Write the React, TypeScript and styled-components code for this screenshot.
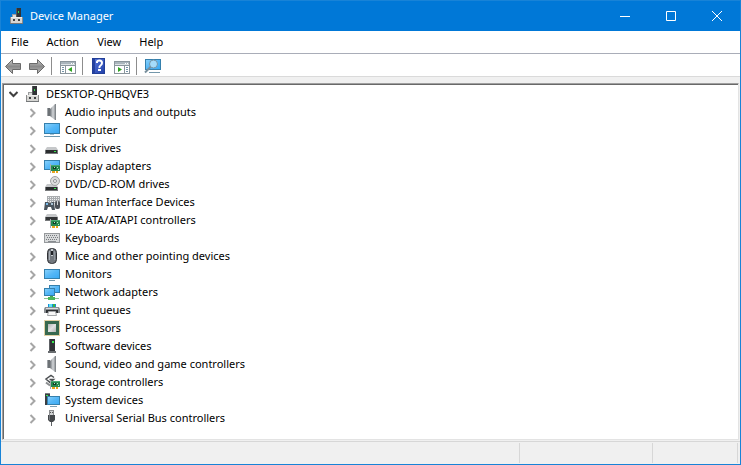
import React from "react";
import styled, { createGlobalStyle } from "styled-components";

const GlobalStyle = createGlobalStyle`
  *, *::before, *::after { box-sizing: border-box; }
  html, body { margin: 0; padding: 0; }
  body, button { font-family: "Noto Sans", "Open Sans", sans-serif; font-size: 11px; color: #000; }
  button { margin: 0; padding: 0; border: 0; background: none; }
`;

const Window = styled.main`
  display: flex;
  flex-direction: column;
  min-height: 100vh;
  border: 1px solid #1883d7;
  background: #f0f0f0;
`;

const TitleBar = styled.header`
  display: flex;
  align-items: center;
  height: 30px;
  padding-left: 8px;
  background: #0078d7;
  color: #fff;
`;

const Title = styled.h1`
  flex: 1;
  margin: 0 0 0 5px;
  font-size: 11px;
  font-weight: 400;
  line-height: 18px;
`;

const CaptionButton = styled.button`
  display: flex;
  align-items: center;
  justify-content: center;
  width: 46px;
  height: 30px;
`;

const MenuBar = styled.nav`
  display: flex;
  height: 23px;
  padding-left: 1px;
  background: #fff;
  border-bottom: 1px solid #a9adb8;
`;

const MenuItem = styled.button`
  padding: 0 9px;
  line-height: 22px;
`;

const Toolbar = styled.div`
  display: flex;
  align-items: center;
  height: 23px;
  padding: 2px 0 0 1px;
  background: #fff;
  border-bottom: 1px solid #dadada;
`;

const ToolButton = styled.button`
  display: flex;
  align-items: center;
  justify-content: center;
  width: 23px;
  height: 20px;
`;

const Divider = styled.span`
  width: 1px;
  height: 18px;
  margin: 0 4px 0 3px;
  background: #8d8d8d;
`;

const TreePanel = styled.section`
  flex: 1;
  margin: 6px 1px 1px 1px;
  border-style: solid;
  border-width: 1px;
  border-color: #a0a0a0 #e3e3e3 #e3e3e3 #a0a0a0;
  box-shadow: inset 1px 1px 0 #696969;
  background: #fff;
  padding: 1px 0 12px 1px;
`;

const TreeList = styled.ul`
  margin: 0;
  padding: 0;
  list-style: none;
`;

const TreeRow = styled.div<{ $level: number }>`
  display: flex;
  align-items: center;
  height: 18px;
  padding-left: ${(p) => (p.$level === 0 ? 1 : 20)}px;
`;

const Expander = styled.button`
  display: flex;
  align-items: center;
  justify-content: center;
  width: 18px;
  height: 18px;
`;

const IconSlot = styled.span`
  display: flex;
  width: 16px;
  height: 16px;
  margin: 0 5px 0 2px;
`;

const RowLabel = styled.span`
  line-height: 18px;
  white-space: nowrap;
`;

const StatusBar = styled.footer`
  display: flex;
  height: 23px;
  padding: 1px 2px 1px 0;
  border-top: 1px solid #d7d7d7;
`;

const StatusCell = styled.div<{ $width?: number }>`
  flex: ${(p) => (p.$width ? `0 0 ${p.$width}px` : "1")};
  border-right: 1px solid #d7d7d7;
`;

const PaintDefs = styled.svg`
  display: block;
  width: 0;
  height: 0;
`;

const Svg = ({ children, w = 16, h = 16 }: { children: React.ReactNode; w?: number; h?: number }) => (
  <svg width={w} height={h} viewBox={`0 0 ${w} ${h}`} fill="none" aria-hidden="true">
    {children}
  </svg>
);

const Gradients = () => (
  <PaintDefs aria-hidden="true">
    <defs>
      <linearGradient id="screen" x1="0" y1="0" x2="1" y2="1">
        <stop offset="0" stopColor="#8ad2fb" />
        <stop offset=".5" stopColor="#55b7f7" />
        <stop offset="1" stopColor="#38a9f4" />
      </linearGradient>
      <linearGradient id="metal" x1="0" y1="0" x2="1" y2="0">
        <stop offset="0" stopColor="#6f7479" />
        <stop offset=".5" stopColor="#d3d6d9" />
        <stop offset="1" stopColor="#777b80" />
      </linearGradient>
      <linearGradient id="arrow" x1="0" y1="0" x2="0" y2="1">
        <stop offset="0" stopColor="#cacaca" />
        <stop offset=".5" stopColor="#8a8a8a" />
        <stop offset="1" stopColor="#bcbcbc" />
      </linearGradient>
      <linearGradient id="help" x1="0" y1="0" x2="1" y2="1">
        <stop offset="0" stopColor="#5777dc" />
        <stop offset="1" stopColor="#2140a8" />
      </linearGradient>
      <linearGradient id="chip" x1="0" y1="0" x2="1" y2="1">
        <stop offset="0" stopColor="#b4b4b4" />
        <stop offset=".5" stopColor="#e2e2e2" />
        <stop offset="1" stopColor="#b4b4b4" />
      </linearGradient>
    </defs>
  </PaintDefs>
);

const Screen = ({ x, y, w, h }: { x: number; y: number; w: number; h: number }) => (
  <rect x={x + 0.5} y={y + 0.5} width={w - 1} height={h - 1} fill="url(#screen)" stroke="#3580ad" />
);

const Card = ({ x, y }: { x: number; y: number }) => (
  <g transform={`translate(${x} ${y})`}>
    <path d="M0 0h1v9H0z" fill="#a9adb0" />
    <path d="M1 1h9v6H1z" fill="#258a50" />
    <path d="M1 1h9v1H1z" fill="#4aa973" />
    <path d="M3 3h3v2H3z" fill="#123c25" />
    <path d="M4 3h1v1H4zM7 3h1v1H7zM8 5h1v1H8z" fill="#b8e3c8" />
    <path d="M2 7h3v2H2zM6 7h2v2H6z" fill="#e8a51d" />
  </g>
);

const DriveBody = ({ y }: { y: number }) => (
  <g transform={`translate(0 ${y})`}>
    <path d="M3 0h9l2 3H1z" fill="#c6c8ca" />
    <path d="M1 3h13v4H1z" fill="#77797b" />
    <path d="M2 3h11v3H2z" fill="#2b2d2f" />
    <path d="M10 4h2v1h-2z" fill="#36e34b" />
  </g>
);

const DeviceIcon = () => (
  <Svg>
    <path d="M7 0h5v9H7z" fill="#303235" />
    <path d="M7 0h1v9H7z" fill="#56595c" />
    <path d="M9 3h1v2H9z" fill="#32dc4a" />
    <path d="M3 6h4v3H3z" fill="#9a9c9d" />
    <path d="M4 7h3v2H4z" fill="#dcdcda" />
    <path d="M1 9h13v7H1z" fill="#8b8b8b" />
    <path d="M2 9h11v6H2z" fill="#d6d6d3" />
    <path d="M2 9h11v1H2z" fill="#efefed" />
    <path d="M4 11h2v2H4zM9 11h2v2H9z" fill="#3f4244" />
    <path d="M1 15h13v1H1z" fill="#75787a" />
  </Svg>
);

const SpeakerIcon = () => (
  <Svg>
    <path d="M3 4h3v8H3z" fill="#6c7175" />
    <path d="M3 4h1v8H3z" fill="#a1a5a9" />
    <path d="M6 5l5-5h1v16h-1l-5-4z" fill="url(#metal)" />
    <path d="M11 0h1v16h-1z" fill="#82878b" />
  </Svg>
);

const ComputerIcon = () => (
  <Svg>
    <Screen x={0} y={1} w={16} h={11} />
    <path d="M6 12h4v1H6z" fill="#a5c3d4" />
    <path d="M0 14h16v1H0z" fill="#6e97ad" />
  </Svg>
);

const MonitorIcon = () => (
  <Svg>
    <Screen x={0} y={3} w={16} h={10} />
    <path d="M5 14h6v1H5z" fill="#7598ab" />
  </Svg>
);

const DiskIcon = () => (
  <Svg>
    <DriveBody y={7} />
  </Svg>
);

const DisplayIcon = () => (
  <Svg>
    <Screen x={0} y={2} w={16} h={10} />
    <Card x={6} y={6} />
  </Svg>
);

const DiscIcon = () => (
  <Svg>
    <DriveBody y={8} />
    <circle cx="11" cy="5" r="4.5" fill="#dcdddd" stroke="#9fa1a2" />
    <circle cx="11" cy="5" r="1.5" fill="#fff" stroke="#8e9092" />
  </Svg>
);

const HidIcon = () => (
  <Svg>
    <path d="M3 2h13v7H3z" fill="#a9acaf" />
    <path d="M4 3.5h11M4 5.5h11M4 7.5h11" stroke="#eef0f1" strokeDasharray="1 1" />
    <path d="M1 8h3l1 1h2l1-1h2l1 8H8l-1-3H4l-1 3H0z" fill="#4a545d" />
    <path d="M2 9h2v2H2z" fill="#79b9e7" />
    <path d="M7 9h2v2H7z" fill="#a9c3d4" />
    <rect x="11" y="7" width="5" height="8" rx="2" fill="#4b5056" />
    <path d="M13 7h1v4h-1z" fill="#d3d6d9" />
  </Svg>
);

const IdeIcon = () => (
  <Svg>
    <path d="M3 2h9l2 3H1z" fill="#c6c8ca" />
    <path d="M1 5h13v4H1z" fill="#77797b" />
    <path d="M2 5h11v3H2z" fill="#333537" />
    <Card x={6} y={7} />
  </Svg>
);

const KeyboardIcon = () => (
  <Svg>
    <rect x="0.5" y="3.5" width="15" height="9" fill="#d8dadb" stroke="#96999c" />
    <path d="M2 5.5h12M3 7.5h11M2 9.5h12" stroke="#777b7f" strokeDasharray="1 1" />
    <path d="M4 11h8v1H4z" fill="#888c90" />
  </Svg>
);

const MouseIcon = () => (
  <Svg>
    <rect x="3.5" y="0.5" width="9" height="15" rx="4" fill="#73787e" stroke="#303236" />
    <path d="M5.5 3v9" stroke="#a9afb6" />
    <path d="M10.5 3v9" stroke="#90969d" />
    <path d="M7 1h2v7H7z" fill="#c9ced3" />
    <path d="M7 3h2v4H7z" fill="#202226" />
  </Svg>
);

const NetworkIcon = () => (
  <Svg>
    <Screen x={5} y={1} w={11} h={8} />
    <Screen x={0} y={4} w={11} h={8} />
    <path d="M6 12h3v2H6z" fill="#46a852" />
    <path d="M0 14h15v1H0z" fill="#8ac592" />
    <path d="M4 13h7v3H4z" fill="#4bb65a" />
  </Svg>
);

const PrinterIcon = () => (
  <Svg>
    <path d="M4 2h8v4H4z" fill="#188bdc" />
    <path d="M5 2h3v3H5z" fill="#5ee2ef" />
    <path d="M9 2h2v3H9z" fill="#39b547" />
    <path d="M1 5h14l1 2v4H0V7z" fill="#8b8f93" />
    <path d="M2 6h12v1H2z" fill="#d9dcde" />
    <path d="M2 8h12v3H2z" fill="#2d3033" />
    <path d="M4.5 9.5h7l1 4h-9z" fill="#f7f7f7" stroke="#a3a6a9" />
  </Svg>
);

const ProcessorIcon = () => (
  <Svg>
    <rect x="0.5" y="0.5" width="15" height="15" stroke="#c5a34a" strokeDasharray="1 1" />
    <path d="M1 1h14v14H1z" fill="#38694f" />
    <path d="M4 4h8v8H4z" fill="url(#chip)" />
  </Svg>
);

const SoftwareIcon = () => (
  <Svg>
    <rect x="5" y="1" width="6" height="12" fill="#303236" />
    <path d="M5 1h1v12H5z" fill="#5d6064" />
    <path d="M8 3h2v2H8z" fill="#39e650" />
    <path d="M4 13h8v2H4z" fill="#696d70" />
  </Svg>
);

const StorageIcon = () => (
  <Svg>
    <path d="M10 3.5L7 1.5 2 5l4 3.5L9.5 5.5h-4" stroke="#4d5053" strokeWidth="1.5" />
    <path d="M2 8.5l4 3" stroke="#8b8e90" strokeWidth="2" />
    <Card x={6} y={6} />
  </Svg>
);

const SystemIcon = () => (
  <Svg>
    <path d="M1 1h5v12H1z" fill="#3a3e42" />
    <path d="M1 1h5v1H1z" fill="#7a7e82" />
    <path d="M2 3h2v1H2z" fill="#39e650" />
    <Screen x={3} y={4} w={13} h={9} />
    <path d="M6 14h7v1H6z" fill="#7da0b4" />
  </Svg>
);

const UsbIcon = () => (
  <Svg>
    <path d="M5 0h5v5H5z" fill="#8b8d8f" />
    <path d="M6 1h3v4H6z" fill="#d0d2d3" />
    <path d="M6 2h1v1H6zM8 2h1v1H8z" fill="#555" />
    <path d="M4 5h7v5l-2 2H6l-2-2z" fill="#45484b" />
    <path d="M5 5h1v5H5z" fill="#777b7f" />
    <path d="M7 12h1v4H7z" fill="#5e6164" />
  </Svg>
);

const ArrowIcon = ({ forward = false }: { forward?: boolean }) => (
  <Svg w={17}>
    <path
      d={forward ? "M16.5 8.5l-7-7v4h-8v6h8v4z" : "M.5 8.5l7-7v4h8v6h-8v4z"}
      fill="url(#arrow)"
      stroke="#6b6b6b"
      strokeLinejoin="round"
    />
  </Svg>
);

const ConsoleIcon = ({ right = false }: { right?: boolean }) => (
  <Svg>
    <rect x="0.5" y="3.5" width="15" height="12" fill="#fff" stroke="#8a959c" />
    <path d="M1 4h14v2H1z" fill="#aab5bc" />
    <path d="M1 6h14v1H1z" fill="#dce2e5" />
    <path d="M1 7h14v1H1z" fill="#8a959c" />
    <path d="M11 5h1v1h-1zM13 5h1v1h-1z" fill="#fff" />
    <path d={right ? "M10 8h1v7h-1z" : "M5 8h1v7H5z"} fill="#8a959c" />
    <path d={right ? "M12 9.5h2M12 11.5h2M12 13.5h2" : "M2 9.5h2M2 11.5h2M2 13.5h2"} stroke="#7594a8" />
    <path d={right ? "M4 9v5l4-2.5z" : "M12 9v5l-4-2.5z"} fill="#31a423" />
  </Svg>
);

const HelpIcon = () => (
  <Svg w={13}>
    <rect x="0.5" y="0.5" width="12" height="15" fill="url(#help)" stroke="#223f98" />
    <path d="M1 1h2v14H1z" fill="#25419f" />
    <path d="M5 5V4q0-1.5 2.5-1.5T10 5q0 1.5-1.5 2.5T7.5 10" stroke="#fff" strokeWidth="2" />
    <path d="M6 11h3v2H6z" fill="#fff" />
  </Svg>
);

const ScanIcon = () => (
  <Svg w={17}>
    <Screen x={1} y={1} w={16} h={11} />
    <path d="M5 14h11v1H5z" fill="#7397aa" />
    <circle cx="9.5" cy="6" r="4" fill="#a5dcfb" stroke="#7795a7" />
    <path d="M6.5 9L1 14.5" stroke="#788f9c" strokeWidth="2" />
  </Svg>
);

const ChevronDown = () => (
  <Svg w={10} h={10}>
    <path d="M.5 3l4 4 4-4" stroke="#404040" strokeWidth="2" />
  </Svg>
);

const ChevronRight = () => (
  <Svg w={10} h={12}>
    <path d="M2.5 3l4 4-4 4" stroke="#a6a6a6" strokeWidth="2" />
  </Svg>
);

const categories: [string, React.FC][] = [
  ["Audio inputs and outputs", SpeakerIcon],
  ["Computer", ComputerIcon],
  ["Disk drives", DiskIcon],
  ["Display adapters", DisplayIcon],
  ["DVD/CD-ROM drives", DiscIcon],
  ["Human Interface Devices", HidIcon],
  ["IDE ATA/ATAPI controllers", IdeIcon],
  ["Keyboards", KeyboardIcon],
  ["Mice and other pointing devices", MouseIcon],
  ["Monitors", MonitorIcon],
  ["Network adapters", NetworkIcon],
  ["Print queues", PrinterIcon],
  ["Processors", ProcessorIcon],
  ["Software devices", SoftwareIcon],
  ["Sound, video and game controllers", SpeakerIcon],
  ["Storage controllers", StorageIcon],
  ["System devices", SystemIcon],
  ["Universal Serial Bus controllers", UsbIcon],
];

export default function App() {
  return (
    <>
      <GlobalStyle />
      <Window>
        <TitleBar>
          <DeviceIcon />
          <Title>Device Manager</Title>
          <CaptionButton aria-label="Minimize">
            <Svg w={10} h={10}><path d="M0 5.5h10" stroke="#fff" /></Svg>
          </CaptionButton>
          <CaptionButton aria-label="Maximize">
            <Svg w={10} h={10}><path d="M.5.5h9v9h-9z" stroke="#fff" /></Svg>
          </CaptionButton>
          <CaptionButton aria-label="Close">
            <Svg w={10} h={10}><path d="M0 0l10 10M10 0L0 10" stroke="#fff" /></Svg>
          </CaptionButton>
        </TitleBar>
        <MenuBar aria-label="Menu">
          {["File", "Action", "View", "Help"].map((m) => (
            <MenuItem key={m}>{m}</MenuItem>
          ))}
        </MenuBar>
        <Toolbar role="toolbar" aria-label="Tools">
          <ToolButton aria-label="Back"><ArrowIcon /></ToolButton>
          <ToolButton aria-label="Forward"><ArrowIcon forward /></ToolButton>
          <Divider />
          <ToolButton aria-label="Show console tree"><ConsoleIcon /></ToolButton>
          <Divider />
          <ToolButton aria-label="Help"><HelpIcon /></ToolButton>
          <ToolButton aria-label="Show action pane"><ConsoleIcon right /></ToolButton>
          <Divider />
          <ToolButton aria-label="Scan for hardware changes"><ScanIcon /></ToolButton>
        </Toolbar>
        <TreePanel>
          <TreeList>
            <li>
              <TreeRow $level={0}>
                <Expander aria-label="Collapse DESKTOP-QHBQVE3" aria-expanded="true"><ChevronDown /></Expander>
                <IconSlot><DeviceIcon /></IconSlot>
                <RowLabel>DESKTOP-QHBQVE3</RowLabel>
              </TreeRow>
              <TreeList>
                {categories.map(([name, Icon]) => (
                  <li key={name}>
                    <TreeRow $level={1}>
                      <Expander aria-label={`Expand ${name}`} aria-expanded="false"><ChevronRight /></Expander>
                      <IconSlot><Icon /></IconSlot>
                      <RowLabel>{name}</RowLabel>
                    </TreeRow>
                  </li>
                ))}
              </TreeList>
            </li>
          </TreeList>
        </TreePanel>
        <StatusBar>
          <StatusCell />
          <StatusCell $width={133} />
          <StatusCell $width={85} />
        </StatusBar>
      </Window>
      <Gradients />
    </>
  );
}
